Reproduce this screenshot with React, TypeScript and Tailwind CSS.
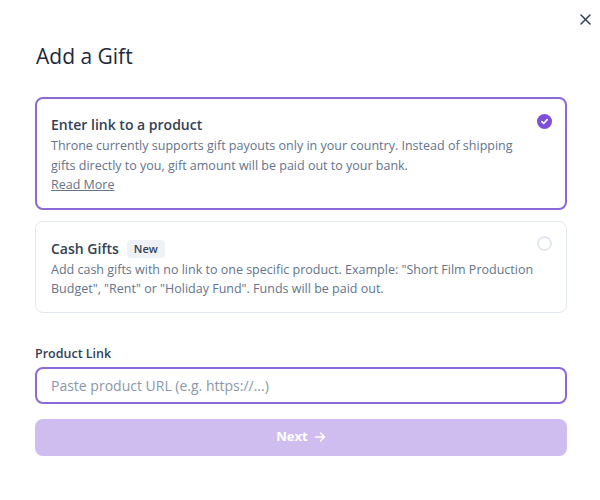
import React from "react";

export default function App() {
  return (
    <div
      className="relative w-[600px] h-[500px] bg-white pl-[35px] pr-[33px] pt-[42px] text-[#334155]"
      style={{ fontFamily: '"Open Sans", "Noto Sans", sans-serif' }}
    >
      <button className="absolute right-[5px] top-[9px] w-[20px] h-[20px] flex items-center justify-center text-[#334155]">
        <svg width="11" height="11" viewBox="0 0 11 11" fill="none" stroke="currentColor" strokeWidth="1.5" strokeLinecap="round">
          <path d="M1 1L10 10M10 1L1 10" />
        </svg>
      </button>

      <h1 className="text-[21px] leading-[28px] text-[#1e293b] ml-[1px]">Add a Gift</h1>

      <div className="mt-[27px] flex flex-col gap-[11px]">
        <div className="relative rounded-[8px] border-2 border-[#8b6ad8] px-[14px] pt-[15px] pb-[13px]">
          <div className="text-[14px] leading-[22px] font-semibold text-[#334155]">Enter link to a product</div>
          <p className="text-[12.5px] leading-[19.5px] text-[#64748b] pr-[25px]">
            Throne currently supports gift payouts only in your country. Instead of shipping gifts directly to you, gift
            amount will be paid out to your bank.
          </p>
          <a className="block w-fit text-[12.5px] leading-[19.5px] text-[#64748b] underline">Read More</a>
          <div className="absolute right-[13px] top-[15px] w-[15px] h-[15px] rounded-full bg-[#7e4fd8] flex items-center justify-center">
            <svg width="9" height="9" viewBox="0 0 10 10" fill="none" stroke="white" strokeWidth="1.8" strokeLinecap="round" strokeLinejoin="round">
              <path d="M2 5.2L4.1 7.2L8 2.9" />
            </svg>
          </div>
        </div>

        <div className="relative rounded-[8px] border border-[#e2e8f0] px-[15px] pt-[16px] pb-[13px]">
          <div className="flex items-center gap-[8px]">
            <span className="text-[14px] leading-[22px] font-semibold text-[#334155]">Cash Gifts</span>
            <span className="text-[11px] leading-[16px] font-semibold text-[#334155] bg-[#eef1f6] rounded-[4px] px-[7px] py-[1px]">
              New
            </span>
          </div>
          <p className="text-[12.5px] leading-[19.5px] text-[#64748b]">
            Add cash gifts with no link to one specific product. Example: "Short Film Production Budget", "Rent" or
            "Holiday Fund". Funds will be paid out.
          </p>
          <div className="absolute right-[14px] top-[14px] w-[15px] h-[15px] rounded-full border-2 border-[#e2e8f0]" />
        </div>
      </div>

      <div className="mt-[32px]">
        <label className="block text-[12.5px] leading-[18px] font-semibold text-[#334155]">Product Link</label>
        <div className="mt-[4px] h-[37px] rounded-[8px] border-2 border-[#8b6ad8] flex items-center px-[14px]">
          <span className="text-[14px] text-[#8a97ab]">Paste product URL (e.g. https://...)</span>
        </div>
        <button className="mt-[15px] w-full h-[37px] rounded-[8px] bg-[#cfbdf0] flex items-center justify-center gap-[6px] text-white text-[13px] font-bold">
          Next
          <svg width="12" height="12" viewBox="0 0 12 12" fill="none" stroke="white" strokeWidth="1.4" strokeLinecap="round" strokeLinejoin="round">
            <path d="M1.5 6H10.5M6.5 2L10.5 6L6.5 10" />
          </svg>
        </button>
      </div>
    </div>
  );
}
